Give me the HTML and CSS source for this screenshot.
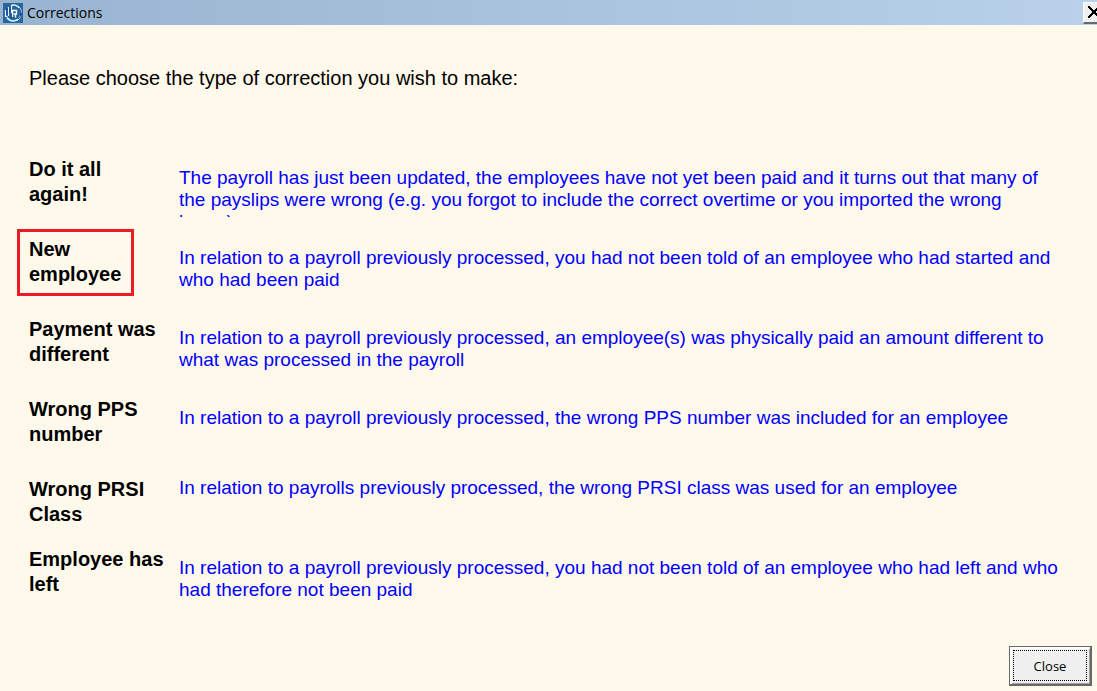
FILE: index.html
```html
<!DOCTYPE html>
<html lang="en">
<head>
    <meta charset="UTF-8">
    <meta name="viewport" content="width=device-width, initial-scale=1.0">
    <title>Corrections</title>
    <link rel="stylesheet" href="styles.css">
</head>
<body>
    <header class="title-bar">
        <svg class="app-icon" viewBox="0 0 20 20" aria-hidden="true">
            <rect width="20" height="20" fill="#24679a"/>
            <path d="M8 2.500A7.500 7.500 0 0 1 18 10M17.500 12.500A7.500 7.500 0 0 1 4 14.500" fill="none" stroke="#e6f3fc" stroke-width="1.500"/>
            <path d="M16 5a7.500 7.500 0 0 1-1 11" fill="none" stroke="#1531a0" stroke-width="1"/>
            <path d="M2.500 7v6.500h2M5.500 4v9M8.500 3v7" fill="none" stroke="#e6f3fc" stroke-width="1.200"/>
            <path d="M9.500 14V7.500h4V11h-3M12.500 11v3.500" fill="none" stroke="#fff" stroke-width="1.300"/>
            <path d="M4 5v7M7 4v6M8 15v-4" fill="none" stroke="#1531a0" stroke-width="1"/>
        </svg>
        <span class="title">Corrections</span>
        <button class="window-close" type="button" aria-label="Close window">
            <svg viewBox="0 0 12 12" shape-rendering="crispEdges" aria-hidden="true">
                <path d="M0 0l12 12M12 0L0 12" stroke="#000" stroke-width="2"/>
            </svg>
        </button>
    </header>

    <main class="content">
        <p class="intro">Please choose the type of correction you wish to make:</p>

        <div class="options">
            <div class="option">
                <button class="choice" type="button">Do it all<br>again!</button>
                <p class="description">The payroll has just been updated, the employees have not yet been paid and it turns out that many of the payslips were wrong (e.g. you forgot to include the correct overtime or you imported the wrong<br>hours)</p>
            </div>
            <div class="option">
                <button class="choice selected" type="button">New<br>employee</button>
                <p class="description">In relation to a payroll previously processed, you had not been told of an employee who had started and who had been paid</p>
            </div>
            <div class="option">
                <button class="choice" type="button">Payment was<br>different</button>
                <p class="description">In relation to a payroll previously processed, an employee(s) was physically paid an amount different to what was processed in the payroll</p>
            </div>
            <div class="option">
                <button class="choice" type="button">Wrong PPS<br>number</button>
                <p class="description">In relation to a payroll previously processed, the wrong PPS number was included for an employee</p>
            </div>
            <div class="option compact">
                <button class="choice" type="button">Wrong PRSI<br>Class</button>
                <p class="description">In relation to payrolls previously processed, the wrong PRSI class was used for an employee</p>
            </div>
            <div class="option">
                <button class="choice" type="button">Employee has<br>left</button>
                <p class="description">In relation to a payroll previously processed, you had not been told of an employee who had left and who had therefore not been paid</p>
            </div>
        </div>
    </main>

    <footer class="footer">
        <button class="close-button" type="button"><span>Close</span></button>
    </footer>
</body>
</html>
```

FILE: styles.css
```css
* {
    box-sizing: border-box;
}

body {
    margin: 0;
    min-height: 100vh;
    display: flex;
    flex-direction: column;
    background-color: #fff9eb;
    color: #000;
    font-family: "Liberation Sans", Arial, sans-serif;
}

p {
    margin: 0;
}

button {
    font-family: inherit;
    color: #000;
    cursor: pointer;
}

.title-bar {
    display: flex;
    align-items: center;
    height: 25px;
    padding-left: 3px;
    background: linear-gradient(to right, #99b4d1, #b9d1ea);
    overflow: hidden;
}

.app-icon {
    width: 20px;
    height: 20px;
    margin-right: 4px;
}

.title {
    font-family: "Open Sans", "Noto Sans", sans-serif;
    font-size: 14px;
}

.window-close {
    display: flex;
    align-items: center;
    width: 21px;
    height: 22px;
    margin-left: auto;
    margin-right: -7px;
    padding: 0 0 0 4px;
    border: 1px solid;
    border-color: #fff #696969 #696969 #fff;
    border-bottom-width: 2px;
    background-color: #f0f0f0;
}

.window-close svg {
    width: 12px;
    height: 12px;
    flex: none;
}

.content {
    flex: 1;
    padding: 41px 35px 0 29px;
}

.intro {
    font-size: 20px;
    line-height: 25px;
    margin-bottom: 66px;
}

.option {
    display: grid;
    grid-template-columns: 150px 1fr;
    align-items: start;
    height: 80px;
}

.choice {
    justify-self: start;
    position: relative;
    padding: 0;
    border: 0;
    background: none;
    font-size: 20px;
    font-weight: bold;
    line-height: 25px;
    text-align: left;
    white-space: nowrap;
}

.selected::after {
    content: "";
    position: absolute;
    inset: -8px -13px -9px -12px;
    border: 3px solid #ed1c24;
}

/* long descriptions are cut off below the box */
.description {
    max-height: 50px;
    margin-top: 10px;
    overflow: hidden;
    color: #0000ff;
    font-size: 19px;
    line-height: 22px;
}

.compact {
    height: 70px;
}

.compact .description {
    margin-top: 0;
}

.footer {
    display: flex;
    justify-content: flex-end;
    padding: 0 5px 5px;
}

.close-button {
    width: 83px;
    height: 40px;
    padding: 3px;
    border: 1px solid #696969;
    border-right-width: 2px;
    border-bottom-width: 2px;
    background-color: #f0f0f0;
    box-shadow: inset 2px 2px #fff, inset -1px -1px #a0a0a0;
    font-family: "Open Sans", "Noto Sans", sans-serif;
    font-size: 13px;
}

.close-button span {
    display: flex;
    align-items: center;
    justify-content: center;
    height: 100%;
    border: 1px dotted #000;
}
```
